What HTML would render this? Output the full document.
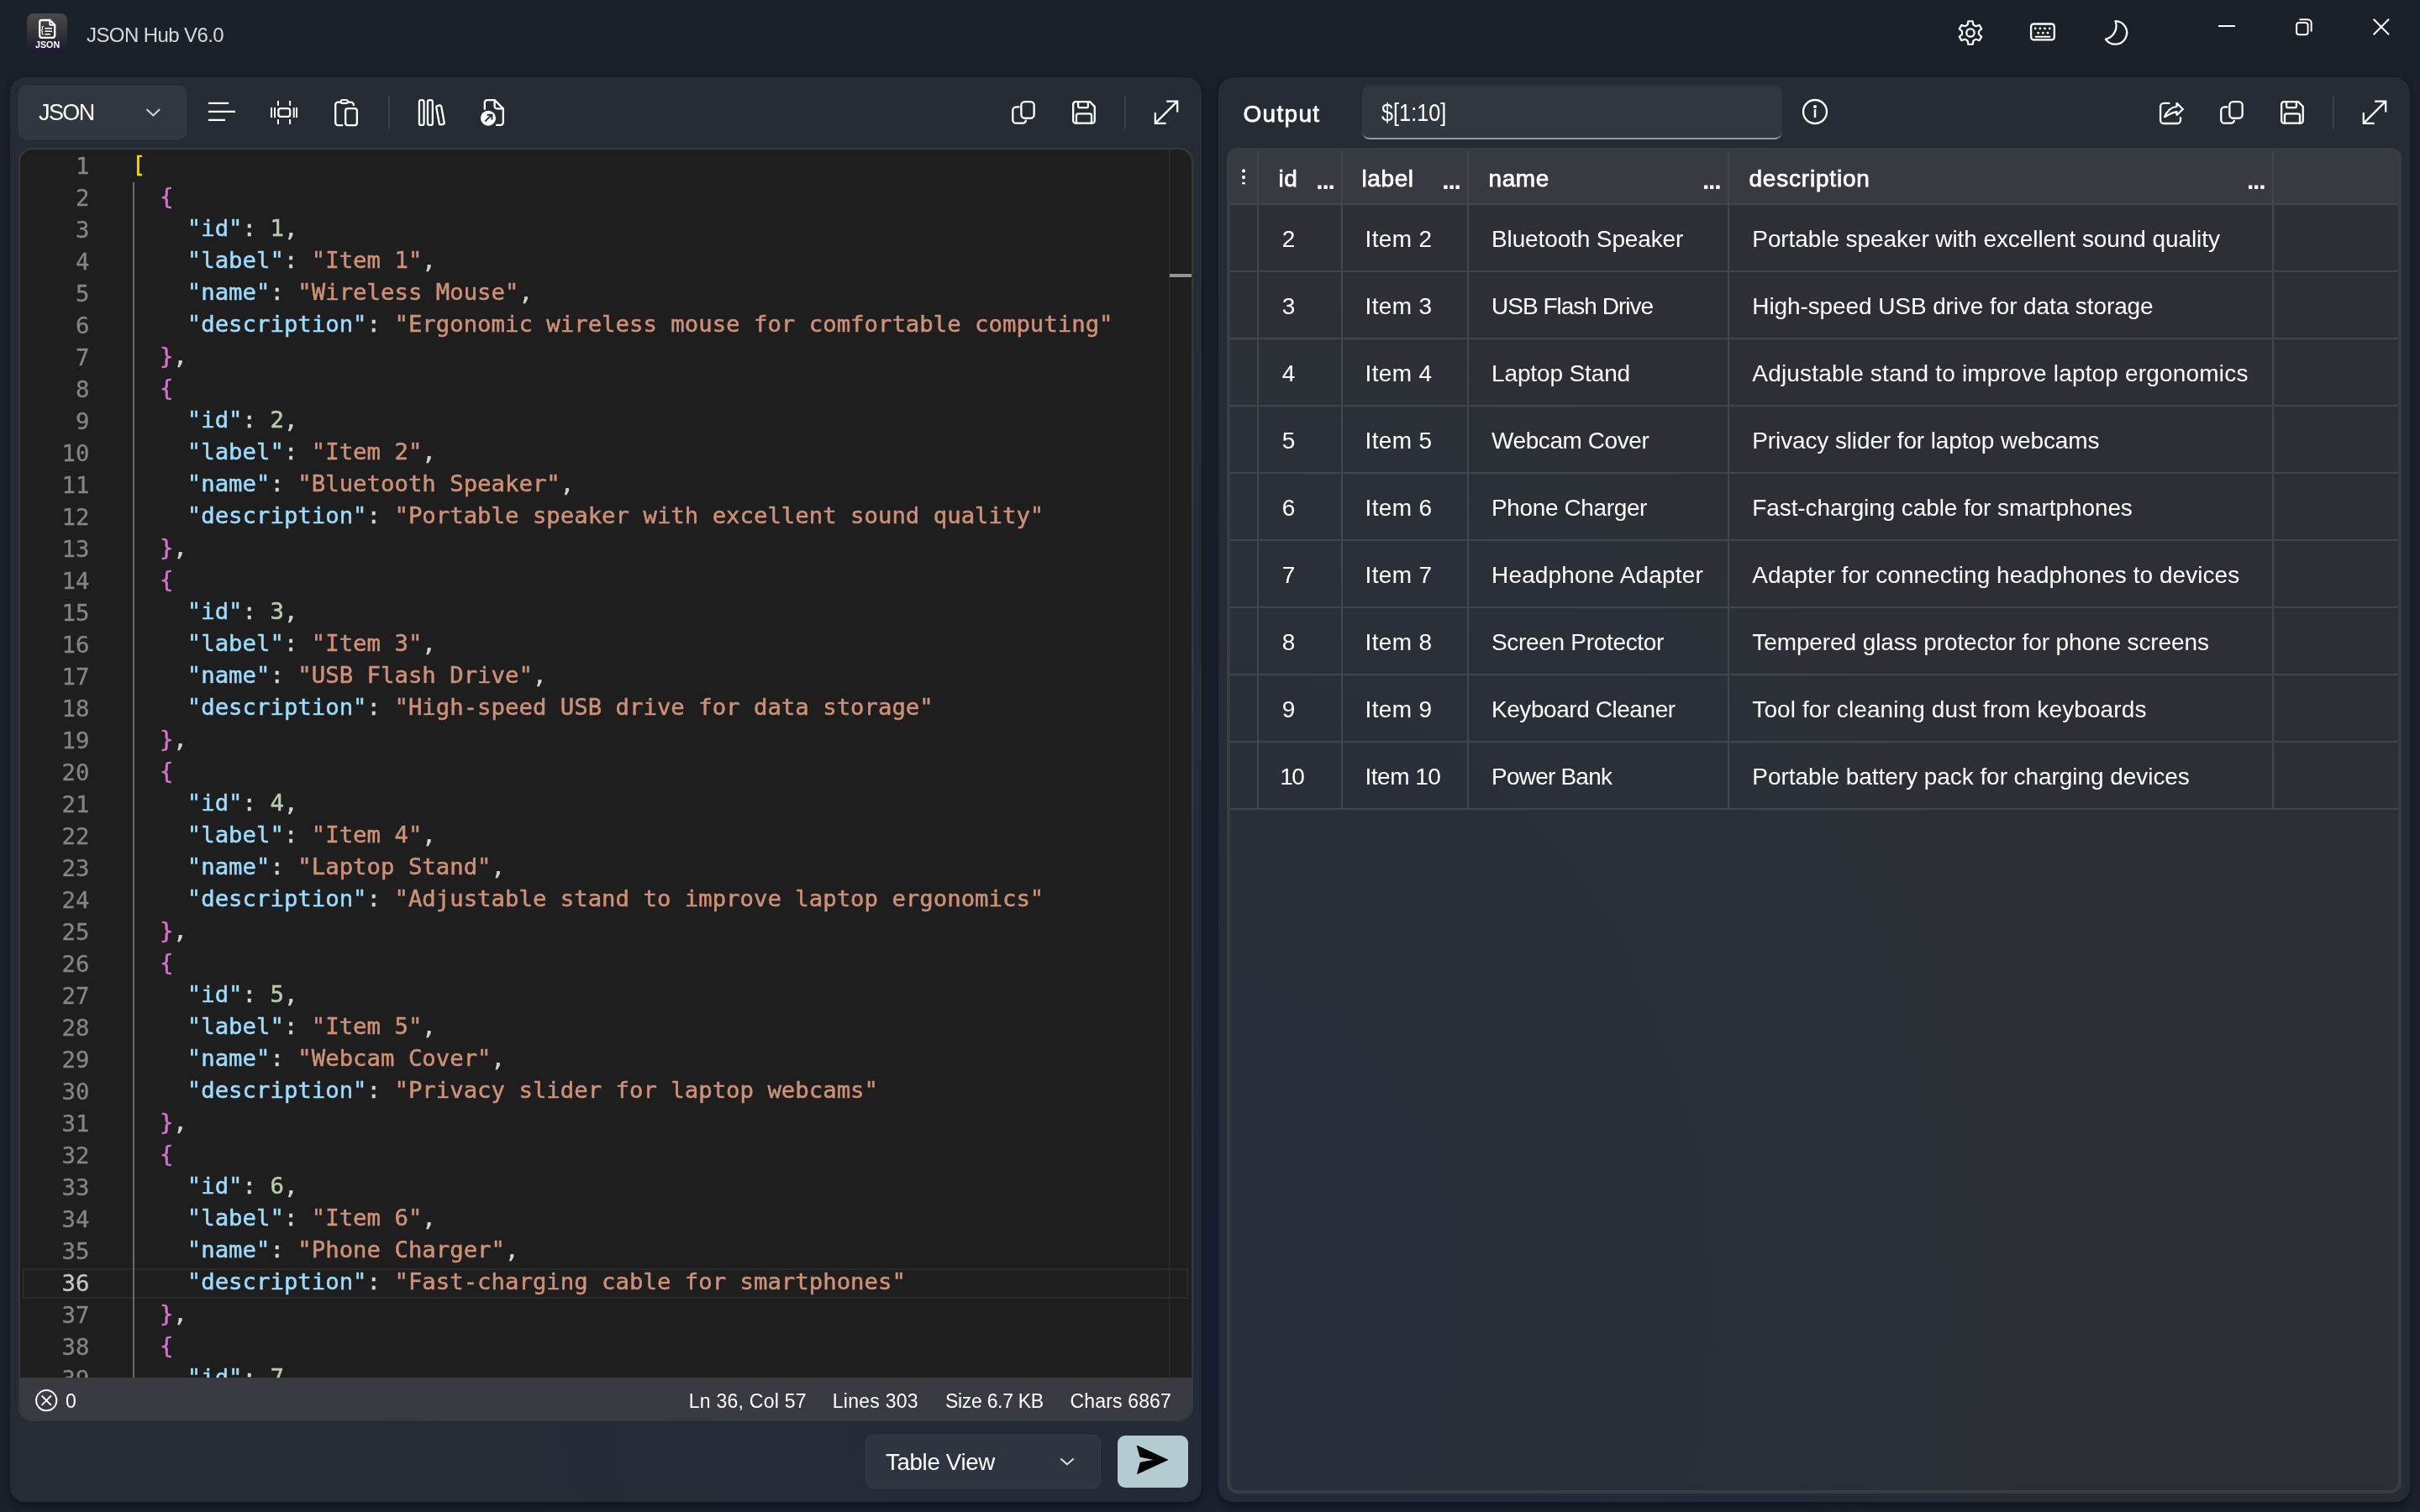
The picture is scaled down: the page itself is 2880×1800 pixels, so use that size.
<!DOCTYPE html>
<html lang="en">
<head>
<meta charset="utf-8">
<title>JSON Hub V6.0</title>
<style>
*{box-sizing:border-box;margin:0;padding:0}
html,body{width:2880px;height:1800px;overflow:hidden}
body{background:radial-gradient(ellipse 1050px 1250px at 1400px 1550px,rgba(16,24,96,.11) 0%,rgba(16,24,96,.08) 45%,rgba(16,24,96,0) 100%),#1b2129;font-family:"Liberation Sans",sans-serif;color:#fff;position:relative}
.abs{position:absolute}
#title,.panel,#ilabel{will-change:transform}
svg{position:absolute;overflow:visible}
.ic{fill:none}
/* title bar */
#appicon{left:32px;top:16px;width:48px;height:48px;border-radius:8px;background:linear-gradient(180deg,#4a4a4a 0%,#3b3b3f 35%,#2a2938 64%,#1a183a 100%)}
#title{left:103px;top:27px;font-size:24px;line-height:30px;color:#d6d9dc;letter-spacing:-0.6px;white-space:pre}
/* panels */
.panel{top:92px;width:1418px;height:1696px;border-radius:18px;box-shadow:0 0 0 1px #161b22,0 4px 10px rgba(8,10,16,.55)}
#lp{left:12px;background:radial-gradient(ellipse 1050px 1250px at 1388px 1458px,rgba(16,24,96,.11) 0%,rgba(16,24,96,.08) 45%,rgba(16,24,96,0) 100%),#262c34}
#rp{left:1450px;background:radial-gradient(ellipse 1050px 1250px at -50px 1458px,rgba(16,24,96,.11) 0%,rgba(16,24,96,.08) 45%,rgba(16,24,96,0) 100%),#262c34}
.dd{background:#30373e;border-radius:9px;box-shadow:inset 0 0 0 1px rgba(255,255,255,.035)}
.sep{width:2px;background:#39414a;height:40px;top:22px}
/* editor */
#ed{left:10px;top:84px;width:1398px;height:1516px;border-radius:17px;background:#1e1e1e;border:2px solid #353a40;overflow:hidden}
#code{left:0;top:0;width:1394px;height:1462px;overflow:hidden;font-family:"DejaVu Sans Mono", "Liberation Mono", monospace;font-size:27.32px}
.ln,.cl{position:absolute;height:38px;line-height:38px;white-space:pre}
.ln{left:0;width:82.4px;text-align:right;color:#858585;-webkit-text-stroke-width:0.3px}
.ln.cur{color:#c6c6c6}
.cl{left:133.0px;color:#d4d4d4;margin-top:-1.4px;-webkit-text-stroke-width:0.5px}
.k{color:#9cdcfe}.s{color:#ce9178}.n{color:#b5cea8}.b1{color:#ffd700}.b2{color:#da70d6}
#guide{left:134.2px;top:38.5px;width:2px;height:1430px;background:#6a6a6a}
#curline{left:3.4px;top:1331.5px;width:1387px;height:36px;border:2px solid #2b2b2b}
#ruler{left:1366.7px;top:0;width:1px;height:1462px;background:#333}
#mark{left:1367.5px;top:148px;width:27px;height:4px;background:#939393}
#status{left:0;top:1462px;width:1394px;height:52px;background:#383c42;font-size:23px;line-height:52px;color:#fff}
#status span{position:absolute;top:2.4px;white-space:pre}
/* right */
#out{left:29.5px;top:26px;font-size:28px;line-height:36px;font-weight:400;-webkit-text-stroke:0.75px #fff;letter-spacing:1.3px;white-space:pre}
#inp{left:171px;top:10px;width:500px;height:64px;background:#30373e;border-radius:9px;border-bottom:2px solid #959ba1;overflow:hidden}
#inp span{position:absolute;left:22.8px;top:14.4px;font-size:29.4px;line-height:36px;white-space:pre;transform:scaleX(.86);transform-origin:0 50%}
#tbl{left:10px;top:84px;width:1398px;height:1602px;border-radius:13px;background:radial-gradient(ellipse 1050px 1250px at -64px 1370px,rgba(16,24,96,.11) 0%,rgba(16,24,96,.08) 45%,rgba(16,24,96,0) 100%),#2c3036;border:4px solid #383d43;overflow:hidden}
#th{left:0;top:0;width:100%;height:62px;background:#373b41}
.hl{left:0;width:100%;height:2px;background:#41464c}
.vl{top:0;width:2px;height:784px;background:#42474d}
.h{position:absolute;top:12.5px;font-size:28px;line-height:40px;font-weight:400;-webkit-text-stroke:0.75px #fff;letter-spacing:0.6px;white-space:pre}
.dots{position:absolute;top:14.6px;font-size:30px;line-height:40px;font-weight:700;letter-spacing:-1.25px}
.row{position:absolute;left:0;width:100%;height:78px;font-size:28px;line-height:78px}
.c{position:absolute;top:2.3px;white-space:pre}
.c1{left:61.8px}.c2{left:160.5px}.c3{left:311px}.c4{left:621.3px;letter-spacing:-0.06px}
</style>
</head>
<body>
<!-- title bar -->
<div id="appicon" class="abs"></div>
<div id="title" class="abs">JSON Hub V6.0</div>

<!-- left panel -->
<div id="lp" class="abs panel">
  <div class="abs dd" style="left:10px;top:10px;width:200px;height:64px"></div>
  <div class="abs" style="left:34px;top:24px;font-size:27px;line-height:36px;letter-spacing:-1.6px;white-space:pre">JSON</div>
  <div class="abs sep" style="left:450px"></div>
  <div class="abs sep" style="left:1326px"></div>
  <div id="ed" class="abs">
    <div id="code" class="abs">
      <div id="curline" class="abs"></div>
<div class="ln" style="top:0.5px">1</div><div class="cl" style="top:0.5px"><span class="b1">[</span></div>
<div class="ln" style="top:38.5px">2</div><div class="cl" style="top:38.5px">  <span class="b2">{</span></div>
<div class="ln" style="top:76.5px">3</div><div class="cl" style="top:76.5px">    <span class="k">&quot;id&quot;</span>: <span class="n">1</span>,</div>
<div class="ln" style="top:114.5px">4</div><div class="cl" style="top:114.5px">    <span class="k">&quot;label&quot;</span>: <span class="s">&quot;Item 1&quot;</span>,</div>
<div class="ln" style="top:152.5px">5</div><div class="cl" style="top:152.5px">    <span class="k">&quot;name&quot;</span>: <span class="s">&quot;Wireless Mouse&quot;</span>,</div>
<div class="ln" style="top:190.5px">6</div><div class="cl" style="top:190.5px">    <span class="k">&quot;description&quot;</span>: <span class="s">&quot;Ergonomic wireless mouse for comfortable computing&quot;</span></div>
<div class="ln" style="top:228.5px">7</div><div class="cl" style="top:228.5px">  <span class="b2">}</span>,</div>
<div class="ln" style="top:266.5px">8</div><div class="cl" style="top:266.5px">  <span class="b2">{</span></div>
<div class="ln" style="top:304.5px">9</div><div class="cl" style="top:304.5px">    <span class="k">&quot;id&quot;</span>: <span class="n">2</span>,</div>
<div class="ln" style="top:342.5px">10</div><div class="cl" style="top:342.5px">    <span class="k">&quot;label&quot;</span>: <span class="s">&quot;Item 2&quot;</span>,</div>
<div class="ln" style="top:380.5px">11</div><div class="cl" style="top:380.5px">    <span class="k">&quot;name&quot;</span>: <span class="s">&quot;Bluetooth Speaker&quot;</span>,</div>
<div class="ln" style="top:418.5px">12</div><div class="cl" style="top:418.5px">    <span class="k">&quot;description&quot;</span>: <span class="s">&quot;Portable speaker with excellent sound quality&quot;</span></div>
<div class="ln" style="top:456.5px">13</div><div class="cl" style="top:456.5px">  <span class="b2">}</span>,</div>
<div class="ln" style="top:494.5px">14</div><div class="cl" style="top:494.5px">  <span class="b2">{</span></div>
<div class="ln" style="top:532.5px">15</div><div class="cl" style="top:532.5px">    <span class="k">&quot;id&quot;</span>: <span class="n">3</span>,</div>
<div class="ln" style="top:570.5px">16</div><div class="cl" style="top:570.5px">    <span class="k">&quot;label&quot;</span>: <span class="s">&quot;Item 3&quot;</span>,</div>
<div class="ln" style="top:608.5px">17</div><div class="cl" style="top:608.5px">    <span class="k">&quot;name&quot;</span>: <span class="s">&quot;USB Flash Drive&quot;</span>,</div>
<div class="ln" style="top:646.5px">18</div><div class="cl" style="top:646.5px">    <span class="k">&quot;description&quot;</span>: <span class="s">&quot;High-speed USB drive for data storage&quot;</span></div>
<div class="ln" style="top:684.5px">19</div><div class="cl" style="top:684.5px">  <span class="b2">}</span>,</div>
<div class="ln" style="top:722.5px">20</div><div class="cl" style="top:722.5px">  <span class="b2">{</span></div>
<div class="ln" style="top:760.5px">21</div><div class="cl" style="top:760.5px">    <span class="k">&quot;id&quot;</span>: <span class="n">4</span>,</div>
<div class="ln" style="top:798.5px">22</div><div class="cl" style="top:798.5px">    <span class="k">&quot;label&quot;</span>: <span class="s">&quot;Item 4&quot;</span>,</div>
<div class="ln" style="top:836.5px">23</div><div class="cl" style="top:836.5px">    <span class="k">&quot;name&quot;</span>: <span class="s">&quot;Laptop Stand&quot;</span>,</div>
<div class="ln" style="top:874.5px">24</div><div class="cl" style="top:874.5px">    <span class="k">&quot;description&quot;</span>: <span class="s">&quot;Adjustable stand to improve laptop ergonomics&quot;</span></div>
<div class="ln" style="top:912.5px">25</div><div class="cl" style="top:912.5px">  <span class="b2">}</span>,</div>
<div class="ln" style="top:950.5px">26</div><div class="cl" style="top:950.5px">  <span class="b2">{</span></div>
<div class="ln" style="top:988.5px">27</div><div class="cl" style="top:988.5px">    <span class="k">&quot;id&quot;</span>: <span class="n">5</span>,</div>
<div class="ln" style="top:1026.5px">28</div><div class="cl" style="top:1026.5px">    <span class="k">&quot;label&quot;</span>: <span class="s">&quot;Item 5&quot;</span>,</div>
<div class="ln" style="top:1064.5px">29</div><div class="cl" style="top:1064.5px">    <span class="k">&quot;name&quot;</span>: <span class="s">&quot;Webcam Cover&quot;</span>,</div>
<div class="ln" style="top:1102.5px">30</div><div class="cl" style="top:1102.5px">    <span class="k">&quot;description&quot;</span>: <span class="s">&quot;Privacy slider for laptop webcams&quot;</span></div>
<div class="ln" style="top:1140.5px">31</div><div class="cl" style="top:1140.5px">  <span class="b2">}</span>,</div>
<div class="ln" style="top:1178.5px">32</div><div class="cl" style="top:1178.5px">  <span class="b2">{</span></div>
<div class="ln" style="top:1216.5px">33</div><div class="cl" style="top:1216.5px">    <span class="k">&quot;id&quot;</span>: <span class="n">6</span>,</div>
<div class="ln" style="top:1254.5px">34</div><div class="cl" style="top:1254.5px">    <span class="k">&quot;label&quot;</span>: <span class="s">&quot;Item 6&quot;</span>,</div>
<div class="ln" style="top:1292.5px">35</div><div class="cl" style="top:1292.5px">    <span class="k">&quot;name&quot;</span>: <span class="s">&quot;Phone Charger&quot;</span>,</div>
<div class="ln cur" style="top:1330.5px">36</div><div class="cl" style="top:1330.5px">    <span class="k">&quot;description&quot;</span>: <span class="s">&quot;Fast-charging cable for smartphones&quot;</span></div>
<div class="ln" style="top:1368.5px">37</div><div class="cl" style="top:1368.5px">  <span class="b2">}</span>,</div>
<div class="ln" style="top:1406.5px">38</div><div class="cl" style="top:1406.5px">  <span class="b2">{</span></div>
<div class="ln" style="top:1444.5px">39</div><div class="cl" style="top:1444.5px">    <span class="k">&quot;id&quot;</span>: <span class="n">7</span>,</div>

      <div id="guide" class="abs"></div>
      <div id="ruler" class="abs"></div>
      <div id="mark" class="abs"></div>
    </div>
    <div id="status" class="abs">
      <span style="left:54px">0</span>
      <span style="left:795.8px;letter-spacing:0.24px">Ln 36, Col 57</span>
      <span style="left:966.8px;letter-spacing:0.26px">Lines 303</span>
      <span style="left:1101px;letter-spacing:-0.3px">Size 6.7 KB</span>
      <span style="left:1249.6px;letter-spacing:0.15px">Chars 6867</span>
    </div>
  </div>
  <div class="abs dd" style="left:1018px;top:1616px;width:280px;height:64px;background:#2f3540"></div>
  <div class="abs" style="left:1042px;top:1630.6px;font-size:27.7px;line-height:36px;letter-spacing:-0.35px;white-space:pre">Table View</div>
  <div class="abs" style="left:1318px;top:1617px;width:84px;height:62px;border-radius:9px;background:#b5cbd2"></div>
</div>

<!-- right panel -->
<div id="rp" class="abs panel">
  <div id="out" class="abs">Output</div>
  <div id="inp" class="abs"><span>$[1:10]</span></div>
  <div class="abs sep" style="left:1326px"></div>
  <div id="tbl" class="abs">
    <div id="th" class="abs"></div>
    <div class="abs hl" style="top:62px"></div>
    <div class="abs hl" style="top:142px"></div>
    <div class="abs hl" style="top:222px"></div>
    <div class="abs hl" style="top:302px"></div>
    <div class="abs hl" style="top:382px"></div>
    <div class="abs hl" style="top:462px"></div>
    <div class="abs hl" style="top:542px"></div>
    <div class="abs hl" style="top:622px"></div>
    <div class="abs hl" style="top:702px"></div>
    <div class="abs hl" style="top:782px"></div>
    <div class="abs vl" style="left:32px"></div>
    <div class="abs vl" style="left:132px"></div>
    <div class="abs vl" style="left:282px"></div>
    <div class="abs vl" style="left:592px"></div>
    <div class="abs vl" style="left:1240px"></div>
    <span class="h" style="left:57.5px">id</span>
    <span class="h" style="left:156.5px">label</span>
    <span class="h" style="left:307.5px">name</span>
    <span class="h" style="left:617.5px;letter-spacing:0.8px">description</span>
    <span class="dots" style="left:102.3px">...</span>
    <span class="dots" style="left:252.3px">...</span>
    <span class="dots" style="left:562px">...</span>
    <span class="dots" style="left:1210px">...</span>
<div class="row" style="top:64px"><span class="c c1">2</span><span class="c c2" style="letter-spacing:0.35px">Item 2</span><span class="c c3" style="letter-spacing:-0.125px">Bluetooth Speaker</span><span class="c c4" style="letter-spacing:-0.085px">Portable speaker with excellent sound quality</span></div>
<div class="row" style="top:144px"><span class="c c1">3</span><span class="c c2" style="letter-spacing:0.35px">Item 3</span><span class="c c3" style="letter-spacing:-0.986px">USB Flash Drive</span><span class="c c4" style="letter-spacing:-0.099px">High-speed USB drive for data storage</span></div>
<div class="row" style="top:224px"><span class="c c1">4</span><span class="c c2" style="letter-spacing:0.35px">Item 4</span><span class="c c3" style="letter-spacing:-0.127px">Laptop Stand</span><span class="c c4" style="letter-spacing:0.183px">Adjustable stand to improve laptop ergonomics</span></div>
<div class="row" style="top:304px"><span class="c c1">5</span><span class="c c2" style="letter-spacing:0.35px">Item 5</span><span class="c c3" style="letter-spacing:-0.418px">Webcam Cover</span><span class="c c4" style="letter-spacing:-0.122px">Privacy slider for laptop webcams</span></div>
<div class="row" style="top:384px"><span class="c c1">6</span><span class="c c2" style="letter-spacing:0.35px">Item 6</span><span class="c c3" style="letter-spacing:-0.375px">Phone Charger</span><span class="c c4" style="letter-spacing:-0.101px">Fast-charging cable for smartphones</span></div>
<div class="row" style="top:464px"><span class="c c1">7</span><span class="c c2" style="letter-spacing:0.35px">Item 7</span><span class="c c3" style="letter-spacing:0.169px">Headphone Adapter</span><span class="c c4" style="letter-spacing:0.056px">Adapter for connecting headphones to devices</span></div>
<div class="row" style="top:544px"><span class="c c1">8</span><span class="c c2" style="letter-spacing:0.35px">Item 8</span><span class="c c3" style="letter-spacing:-0.313px">Screen Protector</span><span class="c c4" style="letter-spacing:-0.101px">Tempered glass protector for phone screens</span></div>
<div class="row" style="top:624px"><span class="c c1">9</span><span class="c c2" style="letter-spacing:0.35px">Item 9</span><span class="c c3" style="letter-spacing:-0.44px">Keyboard Cleaner</span><span class="c c4" style="letter-spacing:0.104px">Tool for cleaning dust from keyboards</span></div>
<div class="row" style="top:704px"><span class="c c1" style="left:59.3px;letter-spacing:-1.6px">10</span><span class="c c2" style="letter-spacing:-0.5px">Item 10</span><span class="c c3" style="letter-spacing:-0.778px">Power Bank</span><span class="c c4" style="letter-spacing:-0.058px">Portable battery pack for charging devices</span></div>

  </div>
</div>
<svg id="icons" width="2880" height="1800" viewBox="0 0 2880 1800" style="left:0;top:0;pointer-events:none" stroke="#fff" stroke-width="2" stroke-linecap="round" stroke-linejoin="round">
<g class="ic" stroke="#fff" stroke-width="2.3"><path d="M50.2 24 H59.5 L65.2 29.8 V42.3 a2.5 2.5 0 0 1 -2.5 2.5 H49.7 a2.5 2.5 0 0 1 -2.5 -2.5 V26.5 a2.5 2.5 0 0 1 2.5 -2.5 Z"/><path d="M59.3 24.2 V28.2 a1.6 1.6 0 0 0 1.6 1.6 H65" stroke-width="2"/></g>
<path class="ic" stroke-width="1.6" stroke-linecap="butt" d="M53.4 33.7 H62 M53.4 37.2 H62 M53.4 40.7 H60"/>
<path class="ic" stroke-width="1.1" d="M51.6 31.2 q-1.3 0 -1.3 1.4 v2.2 q0 1.3 -1 1.4 q1 .1 1 1.4 v2.2 q0 1.4 1.3 1.4"/>
<path class="ic" stroke-width="2.2" stroke-linejoin="round" d="M2341.66 29.26 L2342.36 25.25 L2347.64 25.25 L2348.34 29.26 A7.5 7.5 0 0 0 2351.77 31.24 L2355.58 29.84 L2358.23 34.42 L2355.11 37.02 A7.5 7.5 0 0 0 2355.11 40.98 L2358.23 43.58 L2355.58 48.16 L2351.77 46.76 A7.5 7.5 0 0 0 2348.34 48.74 L2347.64 52.75 L2342.36 52.75 L2341.66 48.74 A7.5 7.5 0 0 0 2338.23 46.76 L2334.42 48.16 L2331.77 43.58 L2334.89 40.98 A7.5 7.5 0 0 0 2334.89 37.02 L2331.77 34.42 L2334.42 29.84 L2338.23 31.24 A7.5 7.5 0 0 0 2341.66 29.26 Z"/>
<circle class="ic" stroke-width="2.3" cx="2345" cy="39" r="4.7"/>
<rect class="ic" stroke-width="2.3" x="2417.1" y="28.5" width="27.7" height="18.9" rx="3.2"/>
<circle cx="2422.2" cy="33.9" r="1.38" fill="#fff" stroke="none"/>
<circle cx="2427.85" cy="33.9" r="1.38" fill="#fff" stroke="none"/>
<circle cx="2433.5" cy="33.9" r="1.38" fill="#fff" stroke="none"/>
<circle cx="2439.2" cy="33.9" r="1.38" fill="#fff" stroke="none"/>
<circle cx="2425.7" cy="39.2" r="1.38" fill="#fff" stroke="none"/>
<circle cx="2431.3" cy="39.2" r="1.38" fill="#fff" stroke="none"/>
<circle cx="2437.0" cy="39.2" r="1.38" fill="#fff" stroke="none"/>
<path class="ic" stroke-width="2" d="M2422.6 43.8 H2439.5"/>
<path class="ic" stroke-width="2.3" d="M2517.51 25.10 A13.8 13.8 0 1 1 2505.84 46.59 A16.3 16.3 0 0 0 2517.51 25.10 Z"/>
<path class="ic" stroke-width="2" stroke-linecap="butt" d="M2640 31 H2660"/>
<rect class="ic" stroke-width="2" x="2733.1" y="27.1" width="13.5" height="14.1" rx="3"/>
<path class="ic" stroke-width="2" d="M2737.2 23.3 H2746.5 a4.2 4.2 0 0 1 4.2 4.2 V36.8"/>
<path class="ic" stroke-width="2" stroke-linecap="butt" d="M2824.7 22.7 L2843 41.3 M2843 22.7 L2824.7 41.3"/>
<path class="ic" stroke="#d4d7da" stroke-width="2" d="M175 130.6 L182.3 137.5 L189.6 130.6"/>
<path class="ic" stroke="#dcdfe6" stroke-width="2" d="M1262.9 1737 L1270 1743.3 L1277.1 1737"/>
<path class="ic" stroke-width="2.4" stroke-linecap="butt" d="M248 122.9 H272.1 M248 132.9 H280 M248 142.9 H268"/>
<rect class="ic" stroke-width="2.3" x="331.35" y="129.05" width="13.8" height="9.8" rx="2.6"/>
<path class="ic" stroke-width="2" stroke-linecap="butt" d="M323 127.9 V140 M327 127.9 V140 M349.7 127.9 V140 M353 127.9 V140 M331 120 V125.8 M345.1 120 V125.8 M331 142 V148 M345.1 142 V148"/>
<path class="ic" stroke-width="2.3" d="M404.8 121.65 H402.2 a3 3 0 0 0 -3 3 V146.05 a3 3 0 0 0 3 3 H407.3 M414.8 121.65 H417.8 a3 3 0 0 1 3 3 V125.3"/>
<rect class="ic" stroke-width="2.1" x="405.7" y="119.05" width="8.2" height="3.8" rx="1.9"/>
<rect class="ic" stroke-width="2.3" x="411.15" y="129.05" width="13.7" height="20" rx="2.8"/>
<rect class="ic" stroke-width="2.3" x="498.95" y="119.05" width="5.6" height="29.8" rx="2.2"/>
<rect class="ic" stroke-width="2.3" x="508.95" y="119.05" width="5.9" height="29.8" rx="2.2"/>
<rect class="ic" stroke-width="2.3" x="-3" y="-11.4" width="6" height="22.8" rx="2" transform="translate(524 136.9) rotate(-10.3)"/>
<path class="ic" stroke-width="2.3" d="M576.85 129.8 V122.05 a3 3 0 0 1 3 -3 H588.6 L598.85 129.4 V145.85 a3 3 0 0 1 -3 3 H591"/>
<path class="ic" stroke-width="2.3" d="M588.6 119.3 V126.4 a3 3 0 0 0 3 3 H598.6"/>
<circle cx="581" cy="140.7" r="9" fill="#fff" stroke="none"/>
<path class="ic" stroke="#252b33" stroke-width="2" stroke-linecap="butt" stroke-linejoin="miter" d="M577.3 144.4 L585 136.9 M579.6 136.8 H585.4 V142.6"/>
<g transform="translate(0 0)"><rect x="1215.35" y="121.15" width="15.3" height="19.6" rx="4.2" class="ic" stroke-width="2.3"/><path class="ic" stroke-width="2.3" d="M1212.6 127.3 H1209.3 a4 4 0 0 0 -4 4 V142.7 a4 4 0 0 0 4 4 H1217 a4 4 0 0 0 3.9 -3.1"/></g>
<g transform="translate(0 0)" class="ic" stroke-width="2.3"><path d="M1280.15 121.15 H1297 L1302.75 126.9 V143.65 a3 3 0 0 1 -3 3 H1280.15 a3 3 0 0 1 -3 -3 V124.15 a3 3 0 0 1 3 -3 Z"/><path d="M1283.1 121.15 V126.2 a2 2 0 0 0 2 2 H1292.9 a2 2 0 0 0 2 -2 V121.15"/><path d="M1281 146.65 V137.3 a2 2 0 0 1 2 -2 H1297 a2 2 0 0 1 2 2 V146.65"/></g>
<g transform="translate(0 0)" class="ic" stroke-width="2.2" stroke-linecap="butt" stroke-linejoin="miter"><path d="M1375.3 146.4 L1400.8 120.9"/><path d="M1388.2 120.6 H1401.2 V133.6"/><path d="M1374.8 134 V146.9 H1387.7"/></g>
<circle class="ic" stroke-width="2.3" cx="2160" cy="133" r="14"/>
<circle cx="2160" cy="127" r="2.05" fill="#fff" stroke="none"/>
<path class="ic" stroke-width="2.5" stroke-linecap="butt" d="M2160 130.2 V140.1"/>
<path class="ic" stroke-width="2.3" d="M2581.5 122.8 H2575.1 a4 4 0 0 0 -4 4 V143 a4 4 0 0 0 4 4 H2591 a4 4 0 0 0 4 -4 V140.2"/>
<path class="ic" stroke-width="2.2" stroke-linejoin="miter" stroke-miterlimit="2" d="M2590.4 122.5 L2597.7 129.9 L2590.4 137.3 V133.2 C2584 134.2 2579.5 137.2 2575.8 139.6 C2578.6 131.8 2584.8 127.1 2590.4 127 Z"/>
<g transform="translate(1438 0)"><rect x="1215.35" y="121.15" width="15.3" height="19.6" rx="4.2" class="ic" stroke-width="2.3"/><path class="ic" stroke-width="2.3" d="M1212.6 127.3 H1209.3 a4 4 0 0 0 -4 4 V142.7 a4 4 0 0 0 4 4 H1217 a4 4 0 0 0 3.9 -3.1"/></g>
<g transform="translate(1438 0)" class="ic" stroke-width="2.3"><path d="M1280.15 121.15 H1297 L1302.75 126.9 V143.65 a3 3 0 0 1 -3 3 H1280.15 a3 3 0 0 1 -3 -3 V124.15 a3 3 0 0 1 3 -3 Z"/><path d="M1283.1 121.15 V126.2 a2 2 0 0 0 2 2 H1292.9 a2 2 0 0 0 2 -2 V121.15"/><path d="M1281 146.65 V137.3 a2 2 0 0 1 2 -2 H1297 a2 2 0 0 1 2 2 V146.65"/></g>
<g transform="translate(1438 0)" class="ic" stroke-width="2.2" stroke-linecap="butt" stroke-linejoin="miter"><path d="M1375.3 146.4 L1400.8 120.9"/><path d="M1388.2 120.6 H1401.2 V133.6"/><path d="M1374.8 134 V146.9 H1387.7"/></g>
<clipPath id="kc"><rect x="1470" y="195" width="20" height="24.2"/></clipPath>
<circle cx="1480" cy="203.4" r="2.05" fill="#fff" stroke="none" clip-path="url(#kc)"/>
<circle cx="1480" cy="211.1" r="2.05" fill="#fff" stroke="none" clip-path="url(#kc)"/>
<circle cx="1480" cy="218.7" r="2.05" fill="#fff" stroke="none" clip-path="url(#kc)"/>
<circle class="ic" stroke-width="2" cx="55.2" cy="1667.2" r="12.1"/>
<path class="ic" stroke-width="1.8" stroke-linecap="butt" d="M49.6 1661.5 L60.9 1672.9 M60.9 1661.5 L49.6 1672.9"/>
<path fill="#000" stroke="#000" stroke-width="1" stroke-linejoin="round" d="M1353.6 1721.3 L1389.6 1737.9 L1353.6 1754.5 L1357.2 1741.2 L1375.5 1737.9 L1357.2 1734.2 Z"/>
</svg>
<div id="ilabel" class="abs" style="left:41.9px;top:46.6px;font-size:10.7px;line-height:13px;font-weight:700;white-space:pre">JSON</div>
</body>
</html>
